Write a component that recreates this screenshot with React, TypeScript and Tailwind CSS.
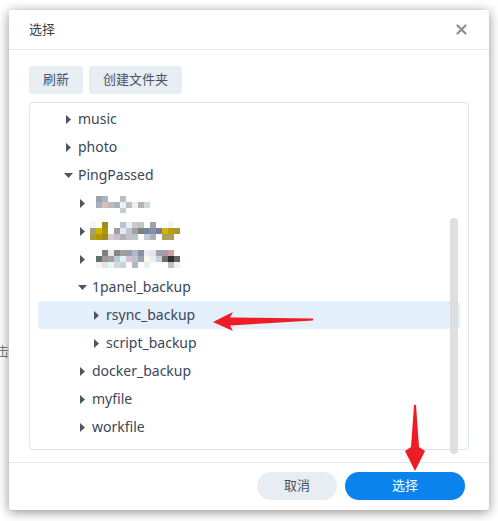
import React from "react";

const CJK = '"Noto Sans", "Noto Sans CJK SC", sans-serif';

function CaretRight() {
  return (
    <span className="flex w-[12px] h-[12px] items-center justify-center">
      <svg width="5" height="9" viewBox="0 0 5 9"><path d="M0 0 L5 4.5 L0 9 Z" fill="#4b5563" /></svg>
    </span>
  );
}
function CaretDown() {
  return (
    <span className="flex w-[12px] h-[12px] items-center justify-center">
      <svg width="9" height="5" viewBox="0 0 9 5"><path d="M0 0 L9 0 L4.5 5 Z" fill="#4b5563" /></svg>
    </span>
  );
}

type Px = [number, number, string];
const blur1: Px[] = [
  [96, 197, "#9ea3a0"], [102, 197, "#aab4c6"], [120, 197, "#bebebe"],
  [96, 203, "#a8b0c0"], [102, 203, "#d8c0b0"], [108, 203, "#bcbcc0"], [114, 203, "#b0b0b8"], [120, 203, "#e8f4f8"], [126, 203, "#b8c0d0"], [132, 203, "#f0f0e8"], [138, 203, "#b0b4b4"], [144, 203, "#d0d8e0"],
  [120, 209, "#c8ccd0"],
];
const blur2: Px[] = [
  [90, 221, "#f4f4f4"], [102, 221, "#a08c20"], [120, 221, "#b8c4d0"], [126, 221, "#e4f0f8"], [132, 221, "#c8ccd0"], [138, 221, "#c4c4c4"], [150, 221, "#a0a0a8"], [168, 221, "#f4f4f4"],
  [90, 227, "#a89c80"], [96, 227, "#d4b400"], [102, 227, "#b09800"], [114, 227, "#a0a0a0"], [120, 227, "#e0e8f0"], [126, 227, "#c0c4c8"], [132, 227, "#a0a0a0"], [138, 227, "#808080"], [144, 227, "#7088a0"], [150, 227, "#8890a0"], [156, 227, "#7080a0"], [162, 227, "#d4b400"], [168, 227, "#b8a000"], [174, 227, "#a89830"],
  [90, 233, "#a89c40"], [96, 233, "#b09800"], [102, 233, "#a08c20"], [108, 233, "#d8d0c8"], [114, 233, "#c8c0d0"], [120, 233, "#b0b0b8"], [126, 233, "#c8c0c0"], [132, 233, "#b8c4d0"], [144, 233, "#c0ccd4"], [150, 233, "#b0b0b8"], [162, 233, "#a8a060"], [168, 233, "#a8a060"],
];
const blur3: Px[] = [
  [102, 249, "#808080"], [108, 249, "#f0e8e0"], [114, 249, "#808890"], [120, 249, "#a0a0a0"], [126, 249, "#9c9cb0"], [132, 249, "#b0b8c8"], [138, 249, "#8890a0"], [144, 249, "#e8f0f4"], [150, 249, "#e0e4ec"], [156, 249, "#a0a0b0"], [162, 249, "#a0a0a0"], [168, 249, "#d0a0a0"],
  [96, 255, "#607070"], [102, 255, "#a09898"], [108, 255, "#a0a0a0"], [114, 255, "#c0c8d0"], [120, 255, "#e0f0f8"], [126, 255, "#d8c0d0"], [132, 255, "#c0c0c8"], [138, 255, "#a0a0b0"], [144, 255, "#fcf8e8"], [150, 255, "#e8f0f4"], [156, 255, "#c8d0d8"], [162, 255, "#707070"], [168, 255, "#303030"], [174, 255, "#606868"],
  [96, 261, "#f4f4f4"], [102, 261, "#e4e4e4"], [108, 261, "#e8f4f8"], [114, 261, "#d0d8e0"], [120, 261, "#c8d0d8"], [132, 261, "#b0b8c8"], [144, 261, "#e8f0f0"], [168, 261, "#c0c0c0"], [174, 261, "#f0f0f0"],
];

function Pixelated({ px, x0, y0 }: { px: Px[]; x0: number; y0: number }) {
  return (
    <svg width="96" height="20" className="block">
      {px.map(([x, y, c], i) => (
        <rect key={i} x={x - x0} y={y - y0} width="6" height="6" fill={c} />
      ))}
    </svg>
  );
}

function Row({
  level,
  open,
  label,
  selected,
  children,
}: {
  level: number;
  open?: boolean;
  label?: string;
  selected?: boolean;
  children?: React.ReactNode;
}) {
  const pl = level === 1 ? "pl-[24px]" : level === 2 ? "pl-[38px]" : "pl-[52px]";
  return (
    <div className={`flex h-[28px] items-center rounded-[4px] ${pl} ${selected ? "bg-[#e3effb]" : ""}`}>
      {open ? <CaretDown /> : <CaretRight />}
      {label ? (
        <span className="ml-[4px] text-[14px] text-[#3a4659] leading-none">{label}</span>
      ) : (
        children
      )}
    </div>
  );
}

export default function App() {
  return (
    <div className="relative w-[498px] h-[521px] overflow-hidden bg-white" style={{ fontFamily: CJK }}>
      <span className="absolute left-[-4px] top-[342px] text-[13px] text-[#7a7f88]">击</span>
      <div className="pl-[9px] pt-[10px]">
        <div className="relative flex flex-col w-[480px] h-[500px] bg-white rounded-[3px] shadow-[0_2px_12px_rgba(0,0,0,0.45)]">
          {/* header */}
          <div className="flex h-[40px] items-center justify-between border-b border-[#e4e8ee] pl-[20px] pr-[22px]">
            <span className="text-[13px] text-[#3b3f48]">选择</span>
            <svg width="11" height="11" viewBox="0 0 11 11">
              <path d="M1.5 1.5 L9.5 9.5 M9.5 1.5 L1.5 9.5" stroke="#8a8f98" strokeWidth="2.2" strokeLinecap="round" />
            </svg>
          </div>
          {/* toolbar */}
          <div className="flex gap-[6px] px-[20px] pt-[16px]">
            <button className="h-[28px] px-[14px] rounded-[3px] bg-[#e8edf4] text-[13px] text-[#4a5161]">刷新</button>
            <button className="h-[28px] px-[14px] rounded-[3px] bg-[#e8edf4] text-[13px] text-[#4a5161]">创建文件夹</button>
          </div>
          {/* tree */}
          <div className="relative mx-[20px] mt-[8px] h-[348px] rounded-[4px] border border-[#dfe5ec] px-[8px] pt-[2px]">
            <Row level={1} label="music" />
            <Row level={1} label="photo" />
            <Row level={1} open label="PingPassed" />
            <Row level={2}>
              <span className="ml-[2px]"><Pixelated px={blur1} x0={90} y0={194} /></span>
            </Row>
            <Row level={2}>
              <span className="ml-[2px]"><Pixelated px={blur2} x0={90} y0={220} /></span>
            </Row>
            <Row level={2}>
              <span className="ml-[2px]"><Pixelated px={blur3} x0={90} y0={248} /></span>
            </Row>
            <Row level={2} open label="1panel_backup" />
            <Row level={3} label="rsync_backup" selected />
            <Row level={3} label="script_backup" />
            <Row level={2} label="docker_backup" />
            <Row level={2} label="myfile" />
            <Row level={2} label="workfile" />
            <div className="absolute right-[10px] top-[115px] h-[236px] w-[8px] rounded-full bg-[#dcdcdc] opacity-90" />
          </div>
          {/* footer */}
          <div className="mt-[12px] flex flex-1 items-start justify-end gap-[8px] border-t border-[#e4e8ee] pr-[24px] pt-[9px]">
            <button className="h-[28px] w-[80px] rounded-full bg-[#e8edf4] text-[13px] text-[#4a5161]">取消</button>
            <button className="h-[28px] w-[120px] rounded-full bg-[#0a84ec] text-[13px] text-white">选择</button>
          </div>
        </div>
      </div>
      {/* annotation arrows */}
      <svg className="absolute left-0 top-0 pointer-events-none" width="498" height="521">
        <polygon points="213,322 233,312 230,317.5 313,318.5 313,320.5 230,325.5 233,331" fill="#ee1c25" />
        <polygon points="414,405 416,405 419,447 425,451 415,471 405,451 411,447" fill="#ee1c25" />
      </svg>
    </div>
  );
}
